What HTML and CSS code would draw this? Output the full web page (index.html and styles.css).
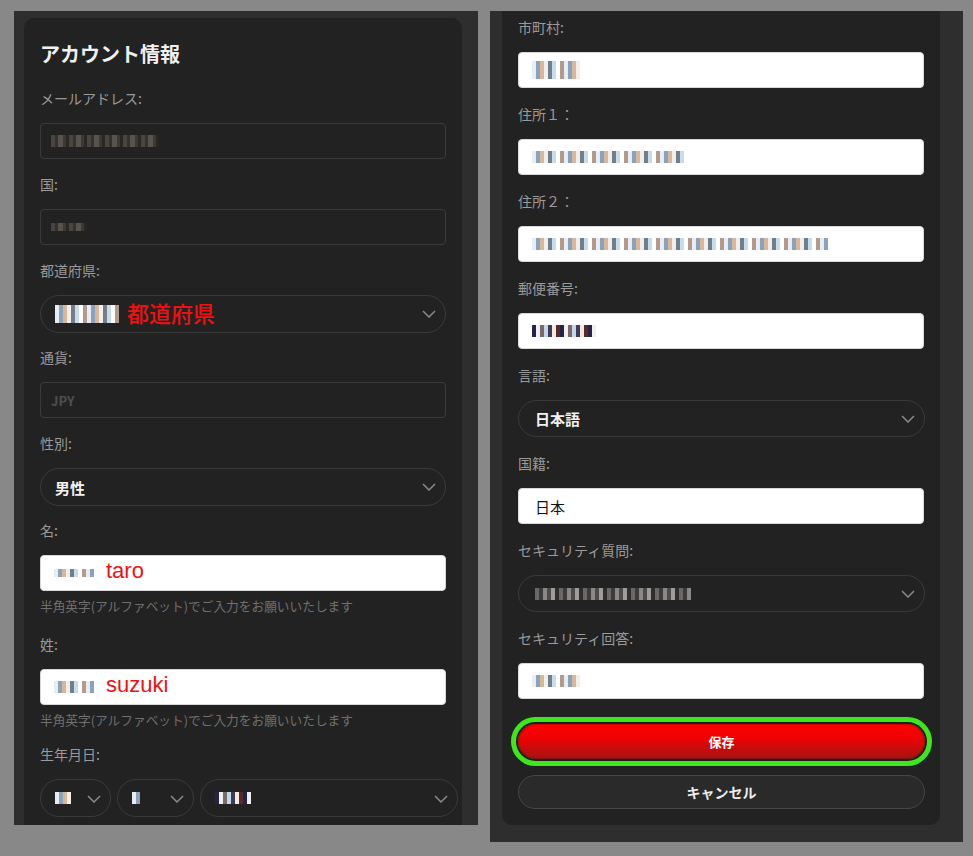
FILE: index.html
```html
<!DOCTYPE html>
<html lang="ja">
<head>
<meta charset="utf-8">
<title>アカウント情報</title>
<link rel="stylesheet" href="styles.css">
</head>
<body>
<div class="page">
  <div class="frame frame-left">
    <div class="card card-left">
      <h1 class="title">アカウント情報</h1>

      <div class="field">
        <div class="label">メールアドレス:</div>
        <div class="input input-disabled"><span class="mosaic m-dim m-108"></span></div>
      </div>

      <div class="field">
        <div class="label">国:</div>
        <div class="input input-disabled"><span class="mosaic m-dim m-36 m-short"></span></div>
      </div>

      <div class="field field-tight">
        <div class="label">都道府県:</div>
        <div class="select">
          <span class="select-value"><span class="mosaic m-bright m-64 m-tall"></span><span class="note note-jp">都道府県</span></span>
          <svg class="chev" width="14" height="8" viewBox="0 0 14 8"><polyline points="1,1 7,7 13,1"/></svg>
        </div>
      </div>

      <div class="field">
        <div class="label">通貨:</div>
        <div class="input input-disabled"><span class="jpy">JPY</span></div>
      </div>

      <div class="field field-tight">
        <div class="label">性別:</div>
        <div class="select">
          <span class="select-value strong">男性</span>
          <svg class="chev" width="14" height="8" viewBox="0 0 14 8"><polyline points="1,1 7,7 13,1"/></svg>
        </div>
      </div>

      <div class="field field-hint">
        <div class="label">名:</div>
        <div class="input input-white"><span class="mosaic m-bright m-40 m-short"></span><span class="note note-en">taro</span></div>
        <div class="hint">半角英字(アルファベット)でご入力をお願いいたします</div>
      </div>

      <div class="field field-hint2">
        <div class="label">姓:</div>
        <div class="input input-white"><span class="mosaic m-bright m-40"></span><span class="note note-en">suzuki</span></div>
        <div class="hint">半角英字(アルファベット)でご入力をお願いいたします</div>
      </div>

      <div class="field">
        <div class="label">生年月日:</div>
        <div class="birth-row">
          <div class="select birth-y">
            <span class="select-value"><span class="mosaic m-bright m-16"></span></span>
            <svg class="chev" width="14" height="8" viewBox="0 0 14 8"><polyline points="1,1 7,7 13,1"/></svg>
          </div>
          <div class="select birth-m">
            <span class="select-value"><span class="mosaic m-bright m-8"></span></span>
            <svg class="chev" width="14" height="8" viewBox="0 0 14 8"><polyline points="1,1 7,7 13,1"/></svg>
          </div>
          <div class="select birth-d">
            <span class="select-value"><span class="mosaic m-dark m-36"></span></span>
            <svg class="chev" width="14" height="8" viewBox="0 0 14 8"><polyline points="1,1 7,7 13,1"/></svg>
          </div>
        </div>
      </div>
    </div>
  </div>

  <div class="frame frame-right">
    <div class="card card-right">
      <div class="field">
        <div class="label">市町村:</div>
        <div class="input input-white"><span class="mosaic m-bright m-48 m-tall"></span></div>
      </div>

      <div class="field">
        <div class="label">住所１：</div>
        <div class="input input-white"><span class="mosaic m-bright m-156"></span></div>
      </div>

      <div class="field">
        <div class="label">住所２：</div>
        <div class="input input-white"><span class="mosaic m-bright m-296"></span></div>
      </div>

      <div class="field">
        <div class="label">郵便番号:</div>
        <div class="input input-white"><span class="mosaic m-dark m-64"></span></div>
      </div>

      <div class="field">
        <div class="label">言語:</div>
        <div class="select select-r">
          <span class="select-value strong">日本語</span>
          <svg class="chev" width="14" height="8" viewBox="0 0 14 8"><polyline points="1,1 7,7 13,1"/></svg>
        </div>
      </div>

      <div class="field">
        <div class="label">国籍:</div>
        <div class="input input-white"><span class="plain">日本</span></div>
      </div>

      <div class="field">
        <div class="label">セキュリティ質問:</div>
        <div class="select select-r">
          <span class="select-value"><span class="mosaic m-grey m-156"></span></span>
          <svg class="chev" width="14" height="8" viewBox="0 0 14 8"><polyline points="1,1 7,7 13,1"/></svg>
        </div>
      </div>

      <div class="field">
        <div class="label">セキュリティ回答:</div>
        <div class="input input-white"><span class="mosaic m-bright m-48"></span></div>
      </div>

      <div class="actions">
        <button class="btn btn-save" type="button">保存</button>
        <button class="btn btn-cancel" type="button">キャンセル</button>
      </div>
    </div>
  </div>
</div>
</body>
</html>
```

FILE: styles.css
```css
* { box-sizing: border-box; }

body {
  margin: 0;
  background: #888888;
  font-family: "Noto Sans CJK JP", "Noto Sans", sans-serif;
  height: 856px;
  overflow: hidden;
}

.page {
  display: flex;
  align-items: flex-start;
  gap: 12px;
  padding: 11px 0 0 14px;
}

.frame { background: #2e2e2e; }

.frame-left {
  width: 464px;
  height: 814px;
  padding: 7px 16px 0 10px;
  overflow: hidden;
}

.frame-right {
  width: 473px;
  padding: 0 23px 17px 12px;
}

.card {
  background: #222222;
  width: 438px;
  padding: 0 16px;
}

.card-left {
  border-radius: 10px 10px 0 0;
  height: 807px;
  padding-top: 22px;
}

.card-right {
  border-radius: 0 0 10px 10px;
  padding: 6px 15px 16px 16px;
}

.title {
  margin: 0 0 20px;
  font-size: 20px;
  line-height: 28px;
  font-weight: 700;
  color: #f0f0f0;
}

.field { margin-bottom: 15px; }
.field-tight { margin-bottom: 14px; }
.field-hint { margin-bottom: 20px; }
.field-hint2 { margin-bottom: 16px; }
.card-right .field { margin-bottom: 16px; }

.label {
  font-size: 14px;
  line-height: 20px;
  color: #9a9a9a;
  margin-bottom: 15px;
}

.input {
  height: 36px;
  border-radius: 4px;
  display: flex;
  align-items: center;
}

.card-right .input { margin-right: 1px; }

.input-disabled {
  border: 1px solid #3b3b3b;
  padding: 0 10px;
}

.input-white {
  background: #ffffff;
  border: 1px solid #d8d8d8;
  padding: 0 13px;
}

.jpy {
  font-size: 13px;
  color: #4f4f4f;
  font-weight: 600;
}

.plain {
  font-size: 15px;
  color: #111;
  padding-left: 3px;
}

.hint {
  margin-top: 7px;
  font-size: 12.7px;
  line-height: 16px;
  color: #707070;
}

.select {
  height: 38px;
  border: 1px solid #3a3a3a;
  border-radius: 19px;
  display: flex;
  align-items: center;
  justify-content: space-between;
  padding: 0 9px 0 14px;
}

.select-r { height: 37px; padding-left: 16px; }

.select-value {
  display: flex;
  align-items: center;
  color: #f2f2f2;
}

.strong {
  font-size: 15px;
  font-weight: 700;
}

.chev {
  fill: none;
  stroke: #8a8a8a;
  stroke-width: 1.5;
  flex: none;
}

.birth-row {
  display: flex;
  gap: 6px;
  width: 418px;
}

.birth-y { width: 71px; }
.birth-m { width: 77px; }
.birth-d { width: 258px; }

.birth-row .chev { margin-top: 2px; }

.note { color: #ee1111; }
.note-jp { font-size: 22px; margin-left: 8px; line-height: 1; margin-top: -5px; font-weight: 500; }
.note-en {
  font-family: "Liberation Sans", Arial, sans-serif;
  font-size: 22px;
  margin-left: 12px;
  margin-top: -5px;
}

.mosaic {
  display: inline-block;
  height: 12px;
  flex: none;
}
.m-short { height: 8px; }
.m-tall { height: 18px; }
.m-8 { width: 8px; }
.m-16 { width: 16px; }
.m-36 { width: 36px; }
.m-40 { width: 40px; }
.m-48 { width: 48px; }
.m-64 { width: 64px; }
.m-108 { width: 108px; }
.m-156 { width: 156px; }
.m-296 { width: 296px; }

.m-dim {
  background:
    repeating-linear-gradient(90deg, #4d4844 0 4px, #36332f 4px 7px, #5e5851 7px 12px, #3f3b37 12px 15px, #2a2826 15px 18px);
  opacity: 0.9;
}

.m-bright {
  background:
    repeating-linear-gradient(90deg, #e8ecf3 0 4px, #8aa3bd 4px 8px, #d9b79a 8px 12px, #f4efe6 12px 16px, #6f7f90 16px 20px, #c9dcea 20px 24px, #ffffff 24px 28px, #b49a8d 28px 32px);
}

.m-dark {
  background:
    repeating-linear-gradient(90deg, #24244a 0 4px, #f0f0f0 4px 8px, #7a6a6a 8px 12px, #c0d8ea 12px 16px, #3b3b5e 16px 20px, #f6e9da 20px 24px, #5a2a2a 24px 28px);
}

.m-grey {
  background:
    repeating-linear-gradient(90deg, #6a6866 0 4px, #3c3b3a 4px 8px, #8b8886 8px 12px, #4d4b4a 12px 16px, #a09c98 16px 20px, #2f2e2d 20px 24px);
}

.actions {
  display: flex;
  flex-direction: column;
  gap: 16px;
  margin-top: 25px;
}

.btn {
  font-family: "Noto Sans CJK JP", "Noto Sans", sans-serif;
  font-weight: 700;
  cursor: pointer;
  width: 100%;
}

.btn-save {
  height: 35px;
  border: none;
  border-radius: 18px;
  color: #ffffff;
  font-size: 13px;
  background: linear-gradient(180deg, #ff0000 0%, #ee0303 40%, #a31414 100%);
  box-shadow: inset 0 0 2px rgba(0,0,0,0.6), 0 0 0 2px #1e1e1e, 0 0 0 7px #3fe61d;
}

.btn-cancel {
  height: 34px;
  border: 1px solid #464646;
  border-radius: 17px;
  background: #2a2a2a;
  color: #ececec;
  font-size: 14px;
}
```
